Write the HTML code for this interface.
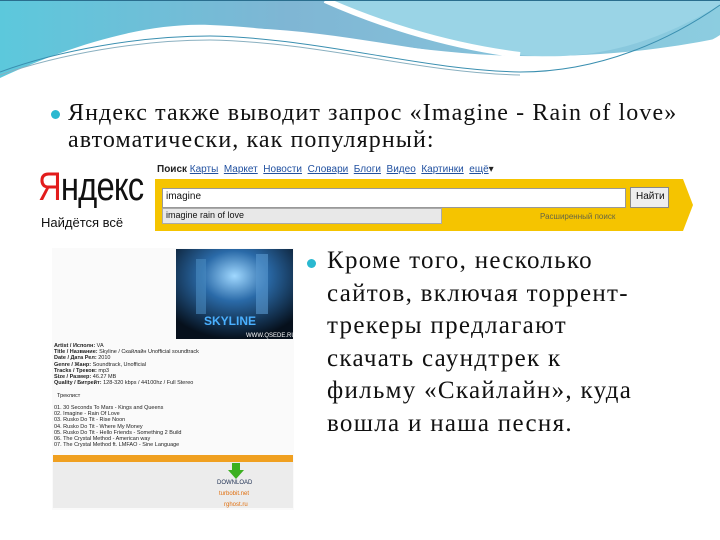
<!DOCTYPE html>
<html><head><meta charset="utf-8">
<style>
*{margin:0;padding:0;box-sizing:border-box}
body{width:720px;height:540px;overflow:hidden;background:#fff;position:relative;font-family:"Liberation Serif",serif;color:#111}
.abs{position:absolute}
.t{font-size:24px;white-space:nowrap;line-height:27px;letter-spacing:1.1px}
.b{font-size:25px;white-space:nowrap;line-height:32.5px;letter-spacing:1.3px}
.dot{position:absolute;width:9px;height:9px;border-radius:50%;background:#2ab8d0}
.s{font-family:"Liberation Sans",sans-serif}
</style></head><body>
<svg class="abs" style="left:0;top:0" width="720" height="80" viewBox="0 0 720 80">
<defs>
<linearGradient id="g1" x1="0" y1="0" x2="1" y2="0"><stop offset="0" stop-color="#5cc8dc"/><stop offset="0.4" stop-color="#7fb6d4"/><stop offset="1" stop-color="#8ccde0"/></linearGradient>
</defs>
<rect width="720" height="80" fill="#fff"/>
<path d="M0 0H720V35C690 55 640 60 560 62C450 62 350 30 240 28C150 26 60 55 0 80Z" fill="url(#g1)"/>
<path d="M0 78C60 50 140 22 210 25C300 28 420 55 520 56C600 57 660 50 720 38V80H0Z" fill="#fff"/>
<path d="M325 0C370 20 440 45 520 55C600 62 660 40 720 5V0Z" fill="#9ad4e6"/>
<path d="M325 0C370 20 440 45 520 55" stroke="#fff" stroke-width="6" fill="none"/>
<path d="M0 72C60 50 140 36 210 36C320 38 420 70 520 72C600 72 670 40 720 5" stroke="#3a8fb0" stroke-width="1" fill="none"/>
<path d="M0 75C60 54 140 40 210 40C320 42 420 73 520 75" stroke="#8ab0c0" stroke-width="1" fill="none"/>
<rect x="0" y="0" width="720" height="1" fill="#2a6e8e"/>
</svg>

<div class="dot" style="left:51px;top:110px"></div>
<div class="abs t" style="left:68px;top:100px">Яндекс также выводит запрос «Imagine - Rain of love»</div>
<div class="abs t" style="left:68px;top:127px">автоматически, как популярный:</div>

<div class="abs s" style="left:38px;top:162px;font-size:40px;letter-spacing:-1px;line-height:50px;color:#111;transform:scaleX(0.82);transform-origin:left"><span style="color:#e21c1c">Я</span>ндекс</div>
<div class="abs s" style="left:41px;top:215px;font-size:13px;color:#111">Найдётся всё</div>
<div class="abs s" style="left:157px;top:164px;font-size:10px;color:#222;white-space:nowrap"><b>Поиск</b> <u style="color:#2050a0">Карты</u> &nbsp;<u style="color:#2050a0">Маркет</u> &nbsp;<u style="color:#2050a0">Новости</u> &nbsp;<u style="color:#2050a0">Словари</u> &nbsp;<u style="color:#2050a0">Блоги</u> &nbsp;<u style="color:#2050a0">Видео</u> &nbsp;<u style="color:#2050a0">Картинки</u> &nbsp;<u style="color:#2050a0">ещё</u>▾</div>
<svg class="abs" style="left:155px;top:179px" width="540" height="55"><path d="M0 0H528L538 26L528 52H0Z" fill="#f5c400"/></svg>
<div class="abs" style="left:162px;top:188px;width:464px;height:20px;background:#fff;border:1px solid #999"></div>
<div class="abs s" style="left:166px;top:191px;font-size:10px">imagine</div>
<div class="abs" style="left:630px;top:187px;width:39px;height:21px;background:#eee;border:1px solid #888"></div>
<div class="abs s" style="left:636px;top:191px;font-size:10px">Найти</div>
<div class="abs" style="left:162px;top:208px;width:280px;height:16px;background:#e8e8e8;border:1px solid #aaa"></div>
<div class="abs s" style="left:166px;top:210px;font-size:9px">imagine rain of love</div>
<div class="abs s" style="left:540px;top:212px;font-size:8px;color:#664">Расширенный поиск</div>

<div class="abs" style="left:52px;top:248px;width:242px;height:262px;background:#fafafa"></div>
<svg class="abs" style="left:176px;top:249px" width="117" height="90">
<defs><radialGradient id="r" cx="0.5" cy="0.3" r="0.7"><stop offset="0" stop-color="#a0d8ff"/><stop offset="0.4" stop-color="#2a6aa8"/><stop offset="1" stop-color="#06101c"/></radialGradient></defs>
<rect width="117" height="90" fill="url(#r)"/>
<rect x="20" y="10" width="10" height="55" fill="#4a8ac0" opacity=".6"/>
<rect x="80" y="5" width="12" height="60" fill="#5a9ad0" opacity=".6"/>
<text x="28" y="76" font-family="Liberation Sans" font-size="12" font-weight="bold" fill="#4ab0ff">SKYLINE</text>
<text x="70" y="88" font-family="Liberation Sans" font-size="6" fill="#fff">WWW.QSEDE.RU</text>
</svg>
<div class="abs s" style="left:54px;top:343px;font-size:5.5px;line-height:6.2px;color:#222;white-space:nowrap">
<b>Artist / Исполн:</b> VA<br><b>Title / Название:</b> Skyline / Скайлайн Unofficial soundtrack<br><b>Date / Дата Рел:</b> 2010<br><b>Genre / Жанр:</b> Soundtrack, Unofficial<br><b>Tracks / Треков:</b> mp3<br><b>Size / Размер:</b> 46.27 MB<br><b>Quality / Битрейт:</b> 128-320 kbps / 44100hz / Full Stereo<br><br>&nbsp;&nbsp;Треклист<br><br>01. 30 Seconds To Mars - Kings and Queens<br>02. Imagine - Rain Of Love<br>03. Rusko Do Tit - Rise Noon<br>04. Rusko Do Tit - Where My Money<br>05. Rusko Do Tit - Hello Friends - Something 2 Build<br>06. The Crystal Method - American way<br>07. The Crystal Method ft. LMFAO - Sine Language</div>
<div class="abs" style="left:53px;top:455px;width:240px;height:7px;background:#f0a020"></div>
<div class="abs" style="left:53px;top:462px;width:240px;height:46px;background:#ececec"></div>
<svg class="abs" style="left:228px;top:463px" width="16" height="16"><path d="M4 0H12V7H16L8 16L0 7H4Z" fill="#3cb020"/></svg>
<div class="abs s" style="left:217px;top:480px;font-size:6px;color:#235">DOWNLOAD</div>
<div class="abs s" style="left:219px;top:491px;font-size:6px;color:#e07010">turbobit.net</div>
<div class="abs s" style="left:224px;top:502px;font-size:6px;color:#e07010">rghost.ru</div>

<div class="dot" style="left:307px;top:259px"></div>
<div class="abs b" style="left:327px;top:245px">Кроме того, несколько<br>сайтов, включая торрент-<br>трекеры предлагают<br>скачать саундтрек к<br>фильму «Скайлайн», куда<br>вошла и наша песня.</div>
</body></html>
